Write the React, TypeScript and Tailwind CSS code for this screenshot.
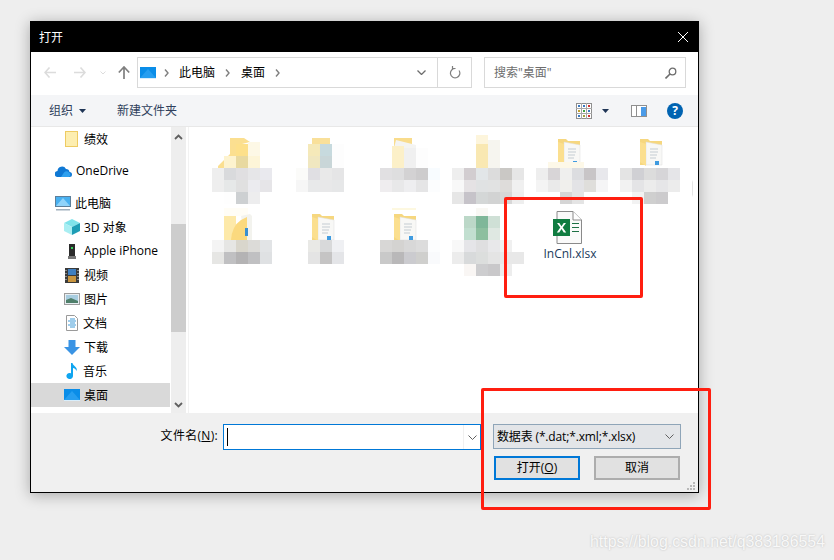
import type { ReactNode } from "react";

const font = "font-['Open_Sans','Noto_Sans_CJK_SC',sans-serif]";

// [y, x, ...colours], one 12px mosaic cell per colour
type Row = [number, number, ...string[]];

function Cells({ rows }: { rows: Row[] }) {
  return (
    <>
      {rows.map(([y, x, ...colors]) =>
        colors.map((c, i) => <rect key={`${y}-${x}-${i}`} x={x + i * 12} y={y} width="12" height="12" fill={c} />)
      )}
    </>
  );
}

function Folder({ x, y, page = true }: { x: number; y: number; page?: boolean }) {
  return (
    <g transform={`translate(${x} ${y})`}>
      <path d="M0 2h8l2 2h12v24H0z" fill="#f6d77f" />
      {page && <path d="M6 5l16 3v20l-16 0z" fill="#f8f8f6" stroke="#dedede" strokeWidth=".5" />}
      {page && <path d="M10 12h8M10 15h8M10 18h7M10 21h6" stroke="#c4ccd2" strokeWidth="1" />}
      {page && <rect x="15" y="24" width="4" height="4" fill="#3f9be0" />}
      <path d="M0 5l6 2v22l-6-4z" fill="#fbdf8f" />
    </g>
  );
}

const thumbs: { x: number; y: number; art: ReactNode }[] = [
  {
    x: 201,
    y: 132,
    art: (
      <>
        <path d="M230 138h14l6 4-8 2-6 12-12 12h-6v-2l12-12z" fill="#fbdf90" />
        <rect x="224" y="156" width="12" height="12" fill="#fdf3cf" />
        <rect x="236" y="144" width="12" height="12" fill="#fde08a" />
        <rect x="236" y="156" width="12" height="12" fill="#e8d9a0" />
        <rect x="248" y="142" width="12" height="14" fill="#fdf8e6" />
        <rect x="248" y="156" width="12" height="12" fill="#fdf5d8" />
        <Cells rows={[[168, 212, "#eeeeee", "#d9dadc", "#e0dfe1", "#e6e6e8", "#e9e9ee"], [180, 212, "#eeeeee", "#e6e8e8", "#e0e0e0", "#ebebef", "#e6e5e8"], [192, 224, "#fefefe", "#cdd0d2", "#ededee"]]} />
      </>
    ),
  },
  {
    x: 283,
    y: 132,
    art: (
      <>
        <rect x="312" y="138" width="18" height="6" fill="#f9e09a" />
        <rect x="308" y="144" width="12" height="12" fill="#f5e9b9" />
        <rect x="308" y="156" width="12" height="12" fill="#f0e7c0" />
        <rect x="320" y="144" width="12" height="12" fill="#c7dade" />
        <rect x="320" y="156" width="12" height="12" fill="#c9d6d8" />
        <rect x="332" y="144" width="12" height="24" fill="#fdfdfd" />
        <Cells rows={[[168, 296, "#fbfbf9", "#e0dfe3", "#e9e9e9", "#e5e5e6"], [180, 296, "#f6f6f6", "#e8e9ea", "#e8e8e9", "#e6e7e8"]]} />
      </>
    ),
  },
  {
    x: 365,
    y: 132,
    art: (
      <>
        <rect x="394" y="138" width="18" height="8" fill="#f9dc8c" />
        <path d="M396 140l20 5v3h-22z" fill="#f4f4f2" />
        <rect x="392" y="146" width="12" height="22" fill="#fcf0c8" />
        <rect x="404" y="148" width="12" height="20" fill="#f0f0f0" />
        <rect x="416" y="148" width="12" height="20" fill="#fdfdfd" />
        <Cells rows={[[168, 380, "#e1e0e2", "#dededf", "#d3d2d3", "#cdcccd", "#f8fcff"], [180, 380, "#efedef", "#e8e8e9", "#eeeef0", "#e5e5e6", "#fcfdfe"]]} />
      </>
    ),
  },
  {
    x: 447,
    y: 132,
    art: (
      <>
        <rect x="476" y="135" width="12" height="9" fill="#fdf5dc" />
        <rect x="476" y="144" width="12" height="24" fill="#f9e8b2" />
        <rect x="488" y="140" width="12" height="28" fill="#f6f5ef" />
        <Cells rows={[[168, 452, "#eeeeee", "#d2cdd0", "#e2e6e8", "#dcdcdc", "#cac8c5", "#e6e6e6"], [180, 452, "#f8f8f8", "#e5e2e4", "#e0e2e3", "#e1e2e2", "#dedcda", "#f0f0f0"], [192, 452, "#e6e6e6", "#c6c3c9", "#d4d7d7", "#d2d3d3", "#d7d7d7", "#eeeeee"]]} />
      </>
    ),
  },
  {
    x: 529,
    y: 132,
    art: (
      <>
        <Folder x={558} y={137} />
        <rect x="548" y="162" width="36" height="6" fill="#fdf8e8" />
        <Cells rows={[[168, 536, "#eeeeee", "#d8d5d7", "#efefee", "#dcdde0", "#c8c5c7", "#e8e8ec"], [180, 536, "#f4f4f4", "#eaeaea", "#f0efec", "#e3e3e6", "#dfdedb", "#f5f5f6"], [192, 560, "#d5d5d5", "#e4e4e4"]]} />
      </>
    ),
  },
  {
    x: 611,
    y: 132,
    art: (
      <>
        <Folder x={640} y={137} />
        <Cells rows={[[168, 620, "#e4e4e4", "#d0d0d4", "#dcdcdc", "#d6d5d8", "#e5e5e8"], [180, 620, "#f2f2f2", "#e4e4e6", "#ececec", "#e6e6e8", "#ececec"], [192, 632, "#f2f2f2", "#cfcfcf", "#cccbcd"]]} />
        <path d="M692 180q4 8 0 17z" fill="#e4e4e4" />
      </>
    ),
  },
  {
    x: 201,
    y: 208,
    art: (
      <>
        <rect x="224" y="208" width="24" height="8" fill="#fffdf6" />
        <rect x="224" y="216" width="12" height="24" fill="#fde9a9" />
        <path d="M241 216l9-2 2 2v24h-7z" fill="#f3f3ee" />
        <path d="M231 240q1-14 10-20l6-3v23z" fill="#fbd97e" />
        <rect x="245" y="228" width="3" height="8" fill="#3a8fd0" />
        <Cells rows={[[240, 212, "#f4f4f4", "#e6e6e4", "#d9d6cc", "#dcdbd8", "#e2e4e6"], [252, 212, "#e6e6e4", "#c0c0c2", "#b4b3b4", "#c0c0c2", "#dfe1e3"]]} />
      </>
    ),
  },
  {
    x: 283,
    y: 208,
    art: (
      <>
        <Folder x={312} y={212} />
        <Cells rows={[[240, 308, "#e9e9e6", "#d8d9da", "#eff0f3"], [252, 308, "#e4e4e4", "#c5c4c4", "#e4e5e8"]]} />
      </>
    ),
  },
  {
    x: 365,
    y: 208,
    art: (
      <>
        <rect x="392" y="208" width="24" height="2" fill="#fdf8e0" />
        <Folder x={394} y={212} />
        <Cells rows={[[240, 380, "#d8d7d6", "#d4d3d1", "#d8d8d8", "#dcdcdc", "#fcfdfe"], [252, 380, "#c9c9c9", "#b9b8b9", "#cbcbcf", "#cfcfcd", "#f9fafc"]]} />
      </>
    ),
  },
  {
    x: 447,
    y: 208,
    art: (
      <>
        <rect x="476" y="208" width="12" height="8" fill="#f9f8f4" />
        <Cells rows={[[216, 464, "#bcd8c8", "#7fb799", "#cfe0d6"], [228, 464, "#c2dfd0", "#8dbf9f", "#dfe8e2"], [240, 452, "#f8f8f8", "#e5e5e8", "#dfdfe0", "#e8e8ea", "#f0f0f0"], [252, 452, "#ececec", "#d8dadb", "#dcdedd", "#e4e4e4", "#e8e8e8", "#e8e8e8"], [264, 464, "#f9f6f4", "#cdcdcf", "#c9c8ca", "#ededed"]]} />
      </>
    ),
  },
];

function Thumb({ x, y, art }: { x: number; y: number; art: ReactNode }) {
  return (
    <svg className="block" width="82" height="76" viewBox={`${x} ${y} 82 76`}>
      {art}
    </svg>
  );
}

function Excel() {
  return (
    <svg width="30" height="33" viewBox="0 0 30 33" className="mr-[5px]">
      <path d="M4 .5h16l8.500 8.500v23.500H4z" fill="#fafafa" stroke="#8a8a8a" />
      <path d="M20 .5V9h8.500" fill="#fff" stroke="#8a8a8a" />
      <path d="M19 12.500h7M19 16.500h7M19 20.500h7" stroke="#1e7145" strokeWidth="1.200" />
      <rect x="0" y="8" width="17" height="17" fill="#107c41" />
      <path d="M4 12l3.300 4.500-3.500 5h2.400l2.300-3.500 2.300 3.500h2.400l-3.500-5 3.300-4.500H10.700l-2.200 3.200L6.300 12z" fill="#fff" />
    </svg>
  );
}

function PcBlue({ className }: { className?: string }) {
  return (
    <svg className={className} width="16" height="12" viewBox="0 0 16 12">
      <rect width="16" height="12" fill="#0a8de8" />
      <path d="M0 11l8-9 8 9z" fill="#39aaf5" opacity=".6" />
      <rect y="11" width="16" height="1" fill="#d8eefc" />
    </svg>
  );
}

const navItems: { label: string; icon: ReactNode; cls: string; latin?: boolean; active?: boolean }[] = [
  {
    label: "绩效",
    cls: "mb-2 pl-[34px]",
    icon: (
      <svg className="mr-[2px]" width="13" height="16" viewBox="0 0 13 16">
        <rect x=".5" y=".5" width="12" height="15" fill="#fdeeb0" stroke="#eecb62" />
      </svg>
    ),
  },
  {
    label: "OneDrive",
    latin: true,
    cls: "mb-2 pl-[24px]",
    icon: (
      <svg width="17" height="11" viewBox="0 0 17 11">
        <path d="M3 11a3 3 0 0 1-.5-6 4.500 4.500 0 0 1 8.500-2 3.500 3.500 0 0 1 3.500 3 2.500 2.500 0 0 1 0 5z" fill="#0f78d4" />
        <path d="M6 11l3-4.500a3.500 3.500 0 0 1 5 0 2.500 2.500 0 0 1 0 4.500z" fill="#2ea0ef" />
      </svg>
    ),
  },
  {
    label: "此电脑",
    cls: "pl-[24px]",
    icon: (
      <svg width="16" height="15" viewBox="0 0 16 15">
        <rect x=".5" y=".5" width="15" height="10" fill="#48b0f0" stroke="#5d7f9a" />
        <path d="M1 10l7-8 7 8z" fill="#8fd3fa" />
        <rect x="1" y="13" width="14" height="1.500" fill="#9fb0bd" />
      </svg>
    ),
  },
  {
    label: "3D 对象",
    cls: "pl-[33px]",
    icon: (
      <svg width="16" height="16" viewBox="0 0 16 16">
        <path d="M8 0l8 4-8 4-8-4z" fill="#7fe3ea" />
        <path d="M0 4l8 4v8l-8-4z" fill="#a9eef2" />
        <path d="M16 4l-8 4v8l8-4z" fill="#1d9db5" />
      </svg>
    ),
  },
  {
    label: "Apple iPhone",
    latin: true,
    cls: "pl-[37px]",
    icon: (
      <svg className="mr-[4px]" width="8" height="15" viewBox="0 0 8 15">
        <rect x="1" width="6" height="12" fill="#2b2b2b" />
        <rect x="3" y="3" width="2" height="2" fill="#35d05a" />
        <rect y="12" width="8" height="3" fill="#777" />
      </svg>
    ),
  },
  {
    label: "视频",
    cls: "pl-[34px]",
    icon: (
      <svg className="mr-px" width="14" height="15" viewBox="0 0 14 15">
        <rect width="14" height="15" fill="#3a3a3a" />
        <rect x="3" y="1" width="8" height="6" fill="#3f7fc0" />
        <rect x="3" y="8" width="8" height="6" fill="#c9953f" />
        <path d="M1 2v1M1 5v1M1 8v1M1 11v1M13 2v1M13 5v1M13 8v1M13 11v1" stroke="#ddd" />
      </svg>
    ),
  },
  {
    label: "图片",
    cls: "pl-[33px]",
    icon: (
      <svg width="16" height="12" viewBox="0 0 16 12">
        <rect x=".5" y=".5" width="15" height="11" fill="#e8eef2" stroke="#9d9d9d" />
        <rect x="2" y="2" width="12" height="8" fill="#a8cde0" />
        <path d="M2 7l5-2 7 3v2H2z" fill="#4f7f6a" />
      </svg>
    ),
  },
  {
    label: "文档",
    cls: "pl-[35px]",
    icon: (
      <svg className="mr-px" width="12" height="16" viewBox="0 0 12 16">
        <path d="M.5.5h8l3 3v12H.5z" fill="#fff" stroke="#9a9a9a" />
        <path d="M4 4h5M2 6h8M4 8h5M2 10h8M4 12h5" stroke="#3f9bd8" />
      </svg>
    ),
  },
  {
    label: "下载",
    cls: "pl-[33px]",
    icon: (
      <svg width="16" height="15" viewBox="0 0 16 15">
        <path d="M4.500 0h7v7H16l-8 8-8-8h4.500z" fill="#3a94e4" />
      </svg>
    ),
  },
  {
    label: "音乐",
    cls: "pl-[35px]",
    icon: (
      <svg className="mr-[1px]" width="12" height="16" viewBox="0 0 12 16">
        <path d="M5 0h1.500c.5 3 5.500 4 4 8-.5-2-2.500-3-3.500-3v8a3.300 3 0 1 1-2-2.700z" fill="#0fa5f0" />
      </svg>
    ),
  },
  { label: "桌面", cls: "pl-[33px]", icon: <PcBlue />, active: true },
];

export default function App() {
  return (
    <div className={`relative h-[560px] w-[834px] overflow-hidden bg-[#eeeeee] pl-[30px] pt-[21px] ${font}`}>
      <div className="flex h-[472px] w-[669px] flex-col border border-black bg-white text-xs text-black shadow-[0_2px_14px_rgba(0,0,0,0.3)]">
        {/* title bar */}
        <div className="flex h-[30px] shrink-0 items-center justify-between bg-black pl-2 pr-[10px] text-white">
          <span className="pt-px">打开</span>
          <svg width="10" height="10" viewBox="0 0 10 10">
            <path d="M0 0l10 10M10 0L0 10" stroke="#fff" />
          </svg>
        </div>

        {/* address row */}
        <div className="flex h-[43px] shrink-0 items-start pt-[5px]">
          <div className="flex h-[31px] w-[106px] shrink-0 items-center pl-[13px]">
            <svg width="12" height="11" viewBox="0 0 12 11" className="mr-[18px]">
              <path d="M5.500 .5L1 5.500l4.500 5M1 5.500h11" fill="none" stroke="#dcdcdc" strokeWidth="1.600" />
            </svg>
            <svg width="12" height="11" viewBox="0 0 12 11" className="mr-[14px]">
              <path d="M6.500 .5l4.500 5-4.500 5M11 5.500H0" fill="none" stroke="#dcdcdc" strokeWidth="1.600" />
            </svg>
            <svg width="6" height="4" viewBox="0 0 6 4" className="mr-[12px]">
              <path d="M.5.5L3 3 5.500.5" fill="none" stroke="#dcdcdc" />
            </svg>
            <svg width="12" height="13" viewBox="0 0 12 13">
              <path d="M.8 6.500L6 1l5.200 5.500M6 1v12" fill="none" stroke="#7f7f7f" strokeWidth="1.700" />
            </svg>
          </div>
          <div className="flex h-[31px] w-[335px] shrink-0 items-center border border-[#d9d9d9]">
            <PcBlue className="ml-[2px]" />
            <Crumb className="ml-2" />
            <span className="ml-[10px]">此电脑</span>
            <Crumb className="ml-[10px]" />
            <span className="ml-[11px]">桌面</span>
            <Crumb className="ml-[10px]" />
            <svg width="9" height="5" viewBox="0 0 9 5" className="ml-auto mr-[11px]">
              <path d="M.5.500L4.500 4.500 8.500.5" fill="none" stroke="#6d6d6d" strokeWidth="1.300" />
            </svg>
            <div className="flex h-full w-[34px] items-center justify-center border-l border-[#d9d9d9]">
              <svg width="12" height="13" viewBox="0 0 12 13">
                <path d="M10 4.500a4.700 4.700 0 1 1-3.500-2H3.500M3.500 0v3.500" fill="none" stroke="#7f7f7f" strokeWidth="1.200" />
              </svg>
            </div>
          </div>
          <div className="ml-3 flex h-[31px] w-[202px] shrink-0 items-center justify-between border border-[#d9d9d9] pl-[9px] pr-[8px] text-[#6d6d6d]">
            <span>搜索"桌面"</span>
            <svg width="12" height="12" viewBox="0 0 12 12">
              <circle cx="7.500" cy="4.500" r="3.300" fill="none" stroke="#6d6d6d" strokeWidth="1.300" />
              <path d="M5 7l-4.500 4.500" stroke="#6d6d6d" strokeWidth="1.600" />
            </svg>
          </div>
        </div>

        {/* toolbar */}
        <div className="flex h-8 shrink-0 items-center border-b border-[#e8e8e8] bg-[#f4f5f7] pl-[18px] text-[#2f3f5c]">
          <span>组织</span>
          <Caret className="ml-[6px]" />
          <span className="ml-[31px]">新建文件夹</span>
          <svg width="16" height="16" viewBox="0 0 16 16" className="ml-auto">
            <rect x=".5" y=".5" width="15" height="15" fill="#fff" stroke="#8f8f8f" />
            <path d="M5.500 0v16M10.500 0v16M0 5.500h16M0 10.500h16" stroke="#a8a8a8" />
            <rect x="2" y="2" width="2" height="2" fill="#3a78c0" />
            <rect x="7" y="2" width="2" height="2" fill="#3a78c0" />
            <rect x="12" y="2" width="2" height="2" fill="#d03030" />
            <rect x="2" y="7" width="2" height="2" fill="#c0a030" />
            <rect x="7" y="7" width="2" height="2" fill="#40a040" />
            <rect x="12" y="7" width="2" height="2" fill="#3a78c0" />
            <rect x="2" y="12" width="2" height="2" fill="#3a78c0" />
            <rect x="7" y="12" width="2" height="2" fill="#a0a040" />
            <rect x="12" y="12" width="2" height="2" fill="#d03030" />
          </svg>
          <Caret className="ml-[10px]" />
          <svg width="16" height="12" viewBox="0 0 16 12" className="ml-[22px]">
            <rect x=".5" y=".5" width="15" height="11" fill="#fff" stroke="#8f8f8f" />
            <rect x="5" y="1" width="1" height="10" fill="#8f8f8f" />
            <rect x="10" y="2" width="5" height="9" fill="#4a9be8" />
          </svg>
          <div className="ml-5 mr-[15px] flex h-4 w-4 items-center justify-center rounded-full bg-[#0063b1] text-[12px] font-bold leading-none text-white">?</div>
        </div>

        {/* main */}
        <div className="flex h-[286px] shrink-0">
          <div className="w-[140px] shrink-0">
            {navItems.map((n) => (
              <div key={n.label} className={`mr-px flex h-6 items-center gap-1 ${n.cls} ${n.active ? "bg-[#d9d9d9]" : ""}`}>
                {n.icon}
                <span className={`whitespace-nowrap ${n.latin ? "" : "pt-px"}`}>{n.label}</span>
              </div>
            ))}
          </div>
          <div className="flex w-[15px] shrink-0 flex-col items-center bg-[#eeeeee]">
            <svg width="9" height="6" viewBox="0 0 9 6" className="mt-[7px]">
              <path d="M1 5l3.500-3.500L8 5" fill="none" stroke="#606060" strokeWidth="1.800" />
            </svg>
            <div className="mt-[84px] h-[108px] w-full bg-[#cdcdcd]" />
            <svg width="9" height="6" viewBox="0 0 9 6" className="mt-auto mb-[5px]">
              <path d="M1 1l3.500 3.500L8 1" fill="none" stroke="#606060" strokeWidth="1.800" />
            </svg>
          </div>
          <div className="ml-[2px] grid flex-1 grid-cols-[repeat(6,82px)] content-start border-l border-[#f2f2f2] pl-3 pt-[5px]">
            {thumbs.map((t) => (
              <Thumb key={t.x + "-" + t.y} {...t} />
            ))}
            <div className="flex flex-col items-center pt-[3px]">
              <Excel />
              <span className="mt-[2px] text-[#1a3a5c]">InCnl.xlsx</span>
            </div>
          </div>
        </div>

        {/* bottom panel */}
        <div className="relative flex flex-1 justify-end bg-[#f0f0f0] pr-[17px] pt-[11px]">
          <span className="mr-[5px] mt-[4px] tracking-[0.3px]">
            文件名(<span className="underline">N</span>):
          </span>
          <div className="mr-3 flex h-[26px] w-[258px] items-center border border-[#0078d7] bg-white pl-[3px]">
            <div className="h-[18px] w-px bg-black" />
            <div className="ml-auto flex h-full w-[17px] items-center justify-center border-l border-[#f0f0f0]">
              <svg width="9" height="5" viewBox="0 0 9 5">
                <path d="M.5.500L4.500 4.500 8.500.5" fill="none" stroke="#606060" />
              </svg>
            </div>
          </div>
          <div className="flex w-[188px] flex-col">
            <div className="flex h-[25px] items-center justify-between border border-[#8fa5b8] bg-[#e3e5e8] pl-[3px] pr-[6px]">
              <span className="tracking-[-0.15px]">数据表 (*.dat;*.xml;*.xlsx)</span>
              <svg width="9" height="5" viewBox="0 0 9 5">
                <path d="M.5.500L4.500 4.500 8.500.5" fill="none" stroke="#606060" />
              </svg>
            </div>
            <div className="ml-px mt-[7px] flex gap-[14px]">
              <div className="flex h-6 w-[86px] items-center justify-center border-2 border-[#0078d7] bg-[#e1e1e1]">
                <span>
                  打开(<span className="underline">O</span>)
                </span>
              </div>
              <div className="flex h-6 w-[86px] items-center justify-center border-2 border-[#adadad] bg-[#e1e1e1]">取消</div>
            </div>
          </div>
          <svg width="8" height="8" viewBox="0 0 8 8" className="absolute bottom-[2px] right-[3px]">
            <path d="M6 0h2v2H6zM3 3h2v2H3zM6 3h2v2H6zM0 6h2v2H0zM3 6h2v2H3zM6 6h2v2H6z" fill="#b8b8b8" />
          </svg>
        </div>
      </div>

      {/* red annotation boxes */}
      <div className="absolute left-[504px] top-[197px] h-[101px] w-[139px] rounded-[2px] border-[3px] border-[#ff1e10]" />
      <div className="absolute left-[481px] top-[388px] h-[122px] w-[230px] rounded-[2px] border-[3px] border-[#ff1e10]" />

      {/* watermark */}
      <span className="absolute left-[590px] top-[530px] whitespace-nowrap font-['Liberation_Sans',sans-serif] text-[15.9px] text-[#f8f8f8] [text-shadow:0_0_2px_#b8b8b8]">
        https://blog.csdn.net/q383186554
      </span>
    </div>
  );
}

function Crumb({ className }: { className?: string }) {
  return (
    <svg width="5" height="8" viewBox="0 0 5 8" className={className}>
      <path d="M1 .5L4 4 1 7.500" fill="none" stroke="#7f7f7f" strokeWidth="1.400" />
    </svg>
  );
}

function Caret({ className }: { className?: string }) {
  return (
    <svg width="7" height="4" viewBox="0 0 7 4" className={className}>
      <path d="M0 0h7L3.500 4z" fill="#1f3556" />
    </svg>
  );
}
